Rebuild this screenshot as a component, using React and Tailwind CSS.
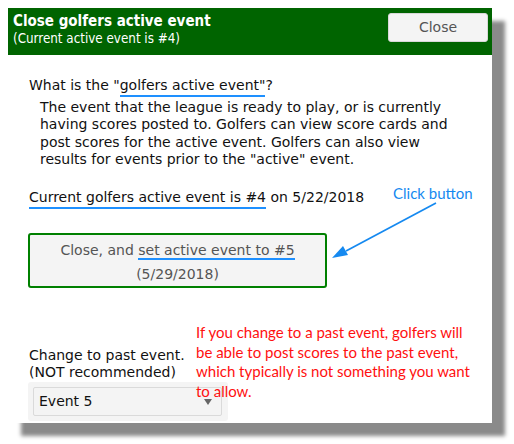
import React from "react";

export default function App() {
  const body = { fontFamily: '"DejaVu Sans", Verdana, sans-serif' };
  const note = { fontFamily: 'Lato, "Open Sans", sans-serif' };
  const cond = { fontFamily: '"DejaVu Sans Condensed", "DejaVu Sans", sans-serif' };
  return (
    <div className="relative w-[514px] h-[444px] bg-white overflow-hidden" style={body}>
      <div className="relative ml-2 mt-2 w-[484px] h-[415px] bg-white shadow-[13px_13px_4px_#8a8a8a] flex flex-col">
        {/* header */}
        <div className="h-[47px] bg-[#006400] flex justify-between items-start">
          <div className="pl-[5px] pt-[5px] text-white">
            <div className="text-[15px] font-bold leading-[17px]" style={cond}>
              Close golfers active event
            </div>
            <div className="text-[13.3px] leading-[17px]" style={cond}>
              (Current active event is #4)
            </div>
          </div>
          <button className="mt-[5px] mr-[4px] w-[100px] h-[29px] bg-[#f4f4f4] border border-[#d8d8d8] rounded-[3px] text-[14px] text-[#555]">
            Close
          </button>
        </div>

        {/* body */}
        <div className="pl-[21px] pt-[22px] text-[14px] text-[#111] leading-[17px]">
          <div>
            What is the "
            <span className="border-b-2 border-[#1e90ff] pb-[2px]">golfers active event"</span>?
          </div>
          <div className="pl-[11px] mt-[5px] leading-[17.3px]">
            The event that the league is ready to play, or is currently
            <br />
            having scores posted to. Golfers can view score cards and
            <br />
            post scores for the active event. Golfers can also view
            <br />
            results for events prior to the "active" event.
          </div>
          <div className="mt-[21px]">
            <span className="border-b-2 border-[#1e90ff] pb-[2px]">Current golfers active event is #4</span> on 5/22/2018
          </div>
          <div className="mt-[27px] w-[299px] -ml-px border-2 border-[#008000] rounded-[3px] bg-[#f4f4f4] text-[#555] text-center leading-[24px] pt-[3px] pb-0">
            <div>
              Close, and <span className="border-b-2 border-[#1e90ff]">set active event to #5</span>
            </div>
            <div>(5/29/2018)</div>
          </div>
          <div className="mt-[59px]">
            <div>Change to past event.</div>
            <div>(NOT recommended)</div>
          </div>
          <div className="-ml-px mt-[1px] w-[200px] h-[39px] bg-[#f4f4f4] rounded-[3px] p-[5px]">
            <div className="h-[29px] w-[189px] border border-[#dadada] rounded-[2px] bg-[#f4f4f4] flex items-center justify-between pl-[5px] pr-[9px]">
              <span className="text-[14px] text-[#111]">Event 5</span>
              <svg width="8" height="6" viewBox="0 0 8 6"><path d="M0 0 L8 0 L4 6 Z" fill="#666" /></svg>
            </div>
          </div>
        </div>

        {/* annotations */}
        <div className="absolute left-[385px] top-[174px] text-[15px] text-[#1589f0]" style={note}>Click button</div>
        <svg className="absolute left-[315px] top-[190px]" width="120" height="70" viewBox="315 190 120 70">
          <line x1="428" y1="195" x2="338" y2="243" stroke="#1589f0" strokeWidth="1.6" />
          <path d="M324 250 L335 238 L340 247 Z" fill="#1589f0" />
        </svg>
        <div className="absolute left-[188px] top-[315px] text-[15px] leading-[19.5px] text-[#ff1010]" style={note}>
          If you change to a past event, golfers will
          <br />
          be able to post scores to the past event,
          <br />
          which typically is not something you want
          <br />
          to allow.
        </div>
      </div>
    </div>
  );
}
